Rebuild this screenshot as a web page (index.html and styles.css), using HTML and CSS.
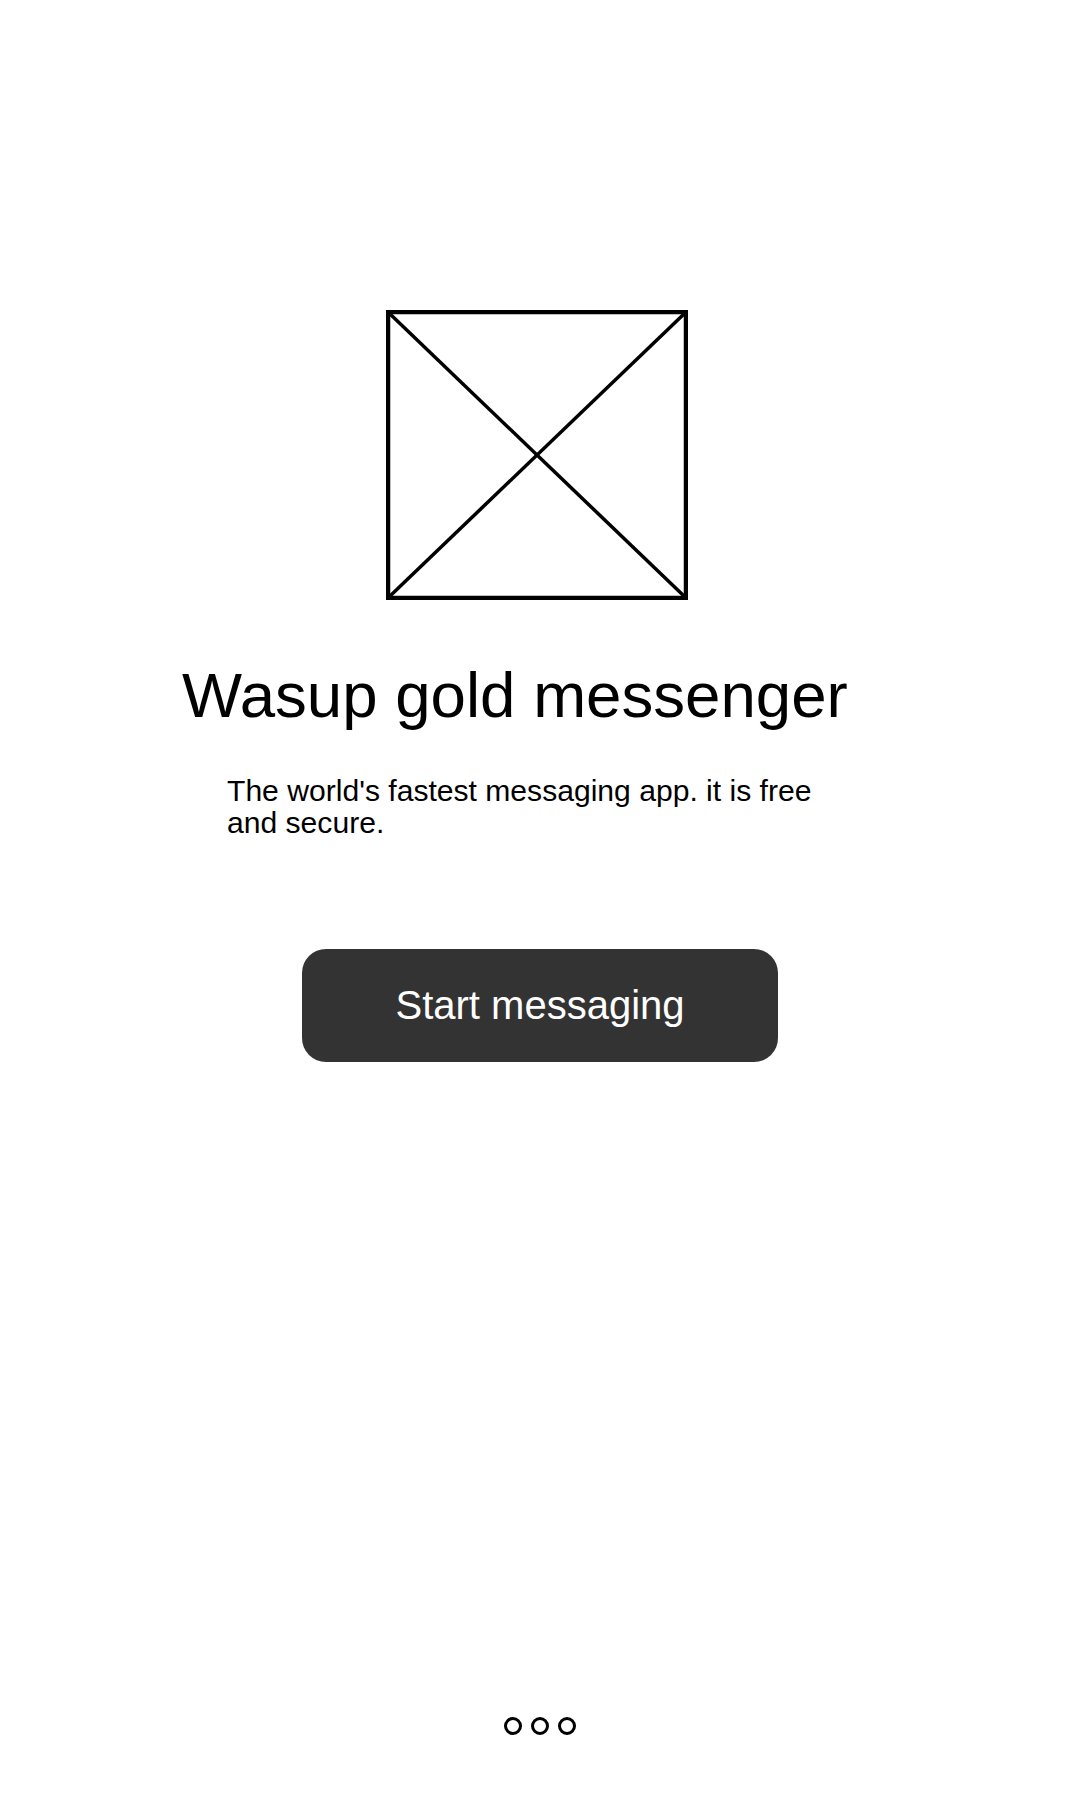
FILE: index.html
```html
<!DOCTYPE html>
<html>
<head>
<meta charset="utf-8">
<link rel="stylesheet" href="styles.css">
</head>
<body>
<div class="screen">
  <svg class="placeholder" width="302" height="290" viewBox="0 0 302 290">
    <rect x="2" y="2" width="298" height="286" fill="none" stroke="#000" stroke-width="4.5"/>
    <line x1="3" y1="3" x2="299" y2="287" stroke="#000" stroke-width="3.5"/>
    <line x1="299" y1="3" x2="3" y2="287" stroke="#000" stroke-width="3.5"/>
  </svg>
  <h1 class="title">Wasup gold messenger</h1>
  <p class="subtitle">The world's fastest messaging app. it is free and secure.</p>
  <button class="start">Start messaging</button>
  <div class="dots">
    <span class="dot"></span>
    <span class="dot"></span>
    <span class="dot"></span>
  </div>
</div>
</body>
</html>
```

FILE: styles.css
```css
html, body {
  margin: 0;
  padding: 0;
  background: #fff;
}
.screen {
  display: flex;
  flex-direction: column;
  align-items: flex-start;
  height: 1800px;
  font-family: "Liberation Sans", Arial, sans-serif;
  color: #000;
}
.placeholder {
  display: block;
  margin: 310px 0 0 386px;
}
.title {
  margin: 63px 0 0 182px;
  font-size: 63.6px;
  line-height: 64px;
  font-weight: normal;
}
.subtitle {
  margin: 48px 0 0 227px;
  width: 612px;
  font-size: 30.1px;
  line-height: 32px;
}
.start {
  margin: 110px 0 0 302px;
  width: 476px;
  height: 113px;
  border: none;
  border-radius: 24px;
  background: #333333;
  color: #fff;
  font-family: "Liberation Sans", Arial, sans-serif;
  font-size: 40px;
  display: flex;
  align-items: center;
  justify-content: center;
  padding: 0;
}
.dots {
  margin-top: auto;
  align-self: stretch;
  display: flex;
  justify-content: center;
  gap: 9px;
  padding-bottom: 65px;
}
.dot {
  width: 18px;
  height: 18px;
  box-sizing: border-box;
  border: 3px solid #000;
  border-radius: 50%;
}
```
